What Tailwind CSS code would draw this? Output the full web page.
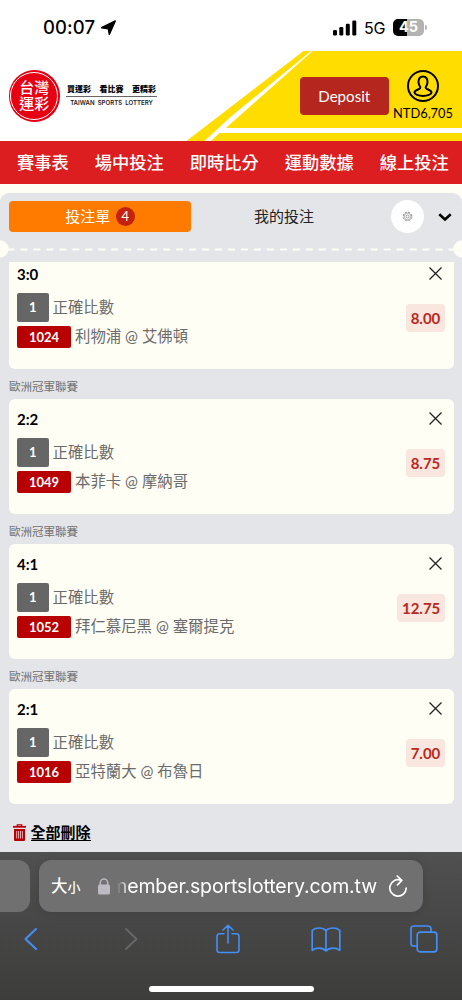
<!DOCTYPE html>
<html lang="zh-Hant">
<head>
<meta charset="utf-8">
<meta name="viewport" content="width=device-width, initial-scale=1">
<title>台灣運彩</title>
<script src="https://cdn.jsdelivr.net/npm/@tailwindcss/browser@4"></script>
</head>
<body class="w-[462px] h-[1000px] overflow-hidden bg-[#fffef5] font-[Lato,'Noto_Sans_CJK_TC',sans-serif] text-black">
<div class="flex h-[1000px] w-[462px] flex-col overflow-hidden">

  <!-- Status bar -->
  <div class="flex h-[51px] shrink-0 items-center bg-white pt-[4px] pl-[43px] font-[Inter,sans-serif]">
    <span class="w-[55px] text-[18.5px] leading-none font-medium tracking-[0.1px] whitespace-nowrap">00:07</span>
    <svg class="ml-[2px]" width="17" height="16" viewBox="0 0 17 16"><path d="M15.300 1 9.300 14.400 8.300 8.700 1.500 7.700z" stroke="#000" stroke-width="1.400" stroke-linejoin="round"/></svg>
    <svg class="ml-[216px]" width="24" height="16" viewBox="0 0 24 16"><rect x="0" y="10" width="4" height="5.500" rx="1.200"/><rect x="6.300" y="7" width="4" height="8.500" rx="1.200"/><rect x="12.800" y="3.800" width="4" height="11.700" rx="1.200"/><rect x="19.300" y=".5" width="4" height="15" rx="1.200"/></svg>
    <span class="ml-[7px] w-[22px] text-[16px] leading-none tracking-[-0.3px]">5G</span>
    <span class="ml-[7px] flex h-[16.500px] w-[31px] items-center justify-center rounded-[5px] bg-linear-to-r from-black from-45% to-[#b3b3b3] to-45% text-[14.500px] leading-none font-bold text-white">45</span>
    <span class="ml-px h-[5px] w-[2px] rounded-r-full bg-[#b3b3b3]"></span>
  </div>

  <!-- Brand header -->
  <header class="relative flex h-[90px] shrink-0 bg-white">
    <svg class="absolute inset-0" width="462" height="90" viewBox="0 0 462 90">
      <path d="M303.500 0H462V90H186.500z" fill="#ffdd00"/>
      <path d="M311 0h1.700L231 72.500 226 77H462v5H219.500l-8.500 8h-6.500L231 65.500z" fill="#fff"/>
    </svg>
    <div class="relative flex w-full items-start">
      <div class="mt-[19px] ml-[8.500px] flex size-[51.500px] items-center justify-center rounded-full bg-[#e60012] p-[1.500px]">
        <div class="flex size-[48px] flex-col items-center justify-center rounded-full border border-white text-[15px] leading-[15.500px] font-medium text-white"><span>台灣</span><span>運彩</span></div>
      </div>
      <div class="mt-[34px] ml-[6px] w-[91px]">
        <div class="flex justify-between border-b border-[#666] px-[1px] pb-[2px] text-[8px] leading-[9px] font-black whitespace-nowrap"><span>買運彩</span><span>看比賽</span><span>更精彩</span></div>
        <div class="mt-[2px] text-center font-[Inter,sans-serif] text-[6.100px] leading-[7px] font-semibold whitespace-nowrap text-[#222] [word-spacing:1.500px]">TAIWAN SPORTS LOTTERY</div>
      </div>
      <button class="mt-[26px] ml-[143px] h-[38px] w-[88.500px] shrink-0 rounded-[4px] bg-[#b5261e] text-[15.100px] text-white">Deposit</button>
      <div class="mt-[19px] ml-[4px] flex w-[61px] flex-col items-center">
        <svg width="32" height="32" viewBox="0 0 32 32" fill="none" stroke="#000" stroke-width="2"><circle cx="16" cy="16" r="15"/><path d="M11.500 12c0-3.500 1.800-5.500 4.500-5.500s4.500 2 4.500 5.500c0 2.500-1 3.500-1.600 4.700-.5 1.200.1 2 1.600 2.600 2.300.9 4 1.800 4 3.200 0 1.800-4 3.500-8.500 3.500s-8.500-1.700-8.500-3.500c0-1.400 1.700-2.300 4-3.200 1.500-.6 2.100-1.400 1.600-2.600-.6-1.200-1.600-2.200-1.600-4.700z"/></svg>
        <span class="mt-[3px] text-[12.900px] leading-[16px] whitespace-nowrap">NTD6,705</span>
      </div>
    </div>
  </header>

  <!-- Main navigation -->
  <nav class="flex h-[43px] shrink-0 items-center gap-[26px] bg-[#dc1e20] pl-[17px] text-[17.250px] leading-none font-medium whitespace-nowrap text-white">
    <span>賽事表</span><span>場中投注</span><span>即時比分</span><span>運動數據</span><span>線上投注</span>
  </nav>

  <!-- Betting slip -->
  <main class="mt-[9px] flex h-[659px] shrink-0 flex-col overflow-hidden rounded-t-[9px] bg-[#e4e5e8]">
    <div class="flex h-[46px] shrink-0 items-center pl-[8.500px]">
      <div class="flex h-[31px] w-[182px] items-center justify-center gap-[5.500px] rounded-[4px] bg-[#ff7b00] pl-[1px] text-[15px] leading-none text-white"><span>投注單</span><span class="flex size-[19px] items-center justify-center rounded-full bg-[#c4210f] text-[13px]">4</span></div>
      <span class="ml-[63.500px] w-[60px] text-[15px] leading-none whitespace-nowrap text-[#222]">我的投注</span>
      <div class="ml-[77px] flex size-[33px] items-center justify-center rounded-full bg-white">
        <svg width="11" height="11" viewBox="0 0 11 11" fill="none" stroke="#888"><circle cx="5.500" cy="5.500" r="4.300" stroke-width="1" stroke-dasharray="2.200 1.177"/><circle cx="5.500" cy="5.500" r="3.300" stroke-width=".6"/><circle cx="5.500" cy="5.500" r="1.500" stroke-width=".8"/></svg>
      </div>
      <svg class="mt-[2px] ml-[14px]" width="14" height="9" viewBox="0 0 14 9" fill="none" stroke="#000" stroke-width="2.600"><path d="M1.300 1.300 7 6.500l5.700-5.200"/></svg>
    </div>
    <svg class="mt-[1px] shrink-0" width="462" height="18" viewBox="0 0 462 18"><path d="M7.500 9.500H455" stroke="#fffef5" stroke-width="2.200" stroke-dasharray="7 5.970"/><circle cx="0" cy="8.800" r="8.600" fill="#fffef5"/><circle cx="462" cy="8.800" r="8.600" fill="#fffef5"/></svg>

    <div class="mt-[-3px] flex h-[597px] flex-col px-[9px] pt-[7px]">
      <section class="flex h-[106.500px] w-[444.500px] shrink-0 rounded-b-[6px] bg-[#fffef5]">
        <div class="flex-1 pl-[8px]">
          <div class="mt-[4px] text-[15px] leading-[16px] font-bold">3:0</div>
          <div class="mt-[10.500px] flex items-center text-[15.400px] leading-none text-[#6b6b6b]"><span class="mr-[4px] flex h-[29.500px] w-[31.500px] items-center justify-center rounded-[2px] bg-[#666] text-[13px] font-bold text-white">1</span>正確比數</div>
          <div class="mt-[4px] flex items-center text-[15.400px] leading-none text-[#6b6b6b]"><span class="mr-[4px] flex h-[21.500px] w-[54px] items-center justify-center rounded-[2px] bg-[#b80000] pt-px text-[13px] font-bold text-white">1024</span>利物浦 @ 艾佛頓</div>
        </div>
        <div class="flex flex-col items-end pr-[8.500px]">
          <svg class="mt-[5px] mr-[3px]" width="13" height="13" viewBox="0 0 13 13" stroke="#222" stroke-width="1.300"><path d="M.5.5l12 12M12.500.5l-12 12"/></svg>
          <span class="mt-[24px] flex h-[28px] items-center rounded-[4px] bg-[#f8e6df] px-[4.700px] text-[15px] leading-none font-bold text-[#b9281e]">8.00</span>
        </div>
      </section>
      <div class="flex h-[30.500px] shrink-0 items-center pt-[5px] text-[11.500px] leading-none text-[#707070]">歐洲冠軍聯賽</div>

      <section class="flex h-[115px] w-[444.500px] shrink-0 rounded-[6px] bg-[#fffef5]">
        <div class="flex-1 pl-[8px]">
          <div class="mt-[12px] text-[15px] leading-[16px] font-bold">2:2</div>
          <div class="mt-[10.500px] flex items-center text-[15.400px] leading-none text-[#6b6b6b]"><span class="mr-[4px] flex h-[29.500px] w-[31.500px] items-center justify-center rounded-[2px] bg-[#666] text-[13px] font-bold text-white">1</span>正確比數</div>
          <div class="mt-[4px] flex items-center text-[15.400px] leading-none text-[#6b6b6b]"><span class="mr-[4px] flex h-[21.500px] w-[54px] items-center justify-center rounded-[2px] bg-[#b80000] pt-px text-[13px] font-bold text-white">1049</span>本菲卡 @ 摩納哥</div>
        </div>
        <div class="flex flex-col items-end pr-[8.500px]">
          <svg class="mt-[13px] mr-[3px]" width="13" height="13" viewBox="0 0 13 13" stroke="#222" stroke-width="1.300"><path d="M.5.5l12 12M12.500.5l-12 12"/></svg>
          <span class="mt-[24px] flex h-[28px] items-center rounded-[4px] bg-[#f8e6df] px-[4.700px] text-[15px] leading-none font-bold text-[#b9281e]">8.75</span>
        </div>
      </section>
      <div class="flex h-[30px] shrink-0 items-center pt-[5px] text-[11.500px] leading-none text-[#707070]">歐洲冠軍聯賽</div>

      <section class="flex h-[115px] w-[444.500px] shrink-0 rounded-[6px] bg-[#fffef5]">
        <div class="flex-1 pl-[8px]">
          <div class="mt-[12px] text-[15px] leading-[16px] font-bold">4:1</div>
          <div class="mt-[10.500px] flex items-center text-[15.400px] leading-none text-[#6b6b6b]"><span class="mr-[4px] flex h-[29.500px] w-[31.500px] items-center justify-center rounded-[2px] bg-[#666] text-[13px] font-bold text-white">1</span>正確比數</div>
          <div class="mt-[4px] flex items-center text-[15.400px] leading-none text-[#6b6b6b]"><span class="mr-[4px] flex h-[21.500px] w-[54px] items-center justify-center rounded-[2px] bg-[#b80000] pt-px text-[13px] font-bold text-white">1052</span>拜仁慕尼黑 @ 塞爾提克</div>
        </div>
        <div class="flex flex-col items-end pr-[8.500px]">
          <svg class="mt-[13px] mr-[3px]" width="13" height="13" viewBox="0 0 13 13" stroke="#222" stroke-width="1.300"><path d="M.5.5l12 12M12.500.5l-12 12"/></svg>
          <span class="mt-[24px] flex h-[28px] items-center rounded-[4px] bg-[#f8e6df] px-[4.700px] text-[15px] leading-none font-bold text-[#b9281e]">12.75</span>
        </div>
      </section>
      <div class="flex h-[30px] shrink-0 items-center pt-[5px] text-[11.500px] leading-none text-[#707070]">歐洲冠軍聯賽</div>

      <section class="flex h-[115px] w-[444.500px] shrink-0 rounded-[6px] bg-[#fffef5]">
        <div class="flex-1 pl-[8px]">
          <div class="mt-[12px] text-[15px] leading-[16px] font-bold">2:1</div>
          <div class="mt-[10.500px] flex items-center text-[15.400px] leading-none text-[#6b6b6b]"><span class="mr-[4px] flex h-[29.500px] w-[31.500px] items-center justify-center rounded-[2px] bg-[#666] text-[13px] font-bold text-white">1</span>正確比數</div>
          <div class="mt-[4px] flex items-center text-[15.400px] leading-none text-[#6b6b6b]"><span class="mr-[4px] flex h-[21.500px] w-[54px] items-center justify-center rounded-[2px] bg-[#b80000] pt-px text-[13px] font-bold text-white">1016</span>亞特蘭大 @ 布魯日</div>
        </div>
        <div class="flex flex-col items-end pr-[8.500px]">
          <svg class="mt-[13px] mr-[3px]" width="13" height="13" viewBox="0 0 13 13" stroke="#222" stroke-width="1.300"><path d="M.5.5l12 12M12.500.5l-12 12"/></svg>
          <span class="mt-[24px] flex h-[28px] items-center rounded-[4px] bg-[#f8e6df] px-[4.700px] text-[15px] leading-none font-bold text-[#b9281e]">7.00</span>
        </div>
      </section>

      <div class="mt-[20px] flex items-center pl-[4px]">
        <svg width="13" height="17" viewBox="0 0 13 17" fill="none" stroke="#b80000"><path d="M0 2.800h13" stroke-width="1.800"/><path d="M4.300 2.500V.8h4.400v1.700" stroke-width="1.200"/><path d="M1 5h11v11a1 1 0 0 1-1 1H2a1 1 0 0 1-1-1z" fill="#b80000" stroke="none"/><path d="M3.700 7v7.500M5.600 7v7.500M7.500 7v7.500M9.400 7v7.500" stroke="#f3d9da" stroke-width=".8"/></svg>
        <span class="ml-[4.500px] border-b border-black text-[15px] leading-[15px] font-bold">全部刪除</span>
      </div>
    </div>
  </main>

  <!-- Browser toolbar -->
  <footer class="flex h-[148px] shrink-0 flex-col bg-linear-to-b from-[#505050] to-[#3d3d3c]">
    <div class="mt-[8px] flex h-[52px] gap-[9px]">
      <div class="w-[30px] rounded-r-[12px] bg-[#707070]"></div>
      <div class="flex w-[384px] items-center rounded-[12px] bg-[#707070] pl-[12px] text-white shadow-[0_1px_8px_rgba(0,0,0,0.12)]">
        <span class="flex w-[30px] items-baseline text-[16.500px] leading-none font-medium whitespace-nowrap">大<span class="text-[13px]">小</span></span>
        <svg class="ml-[17px]" width="12" height="17" viewBox="0 0 12 17"><rect y="6.500" width="12" height="10" rx="1.600" fill="#bdbac3"/><path d="M2.300 7V4.800a3.700 3.700 0 0 1 7.400 0V7" fill="none" stroke="#bdbac3" stroke-width="1.500"/></svg>
        <div class="ml-[7px] flex w-[260px] justify-end overflow-hidden font-[Inter,sans-serif] text-[19.500px] leading-[26px] tracking-[-0.120px] whitespace-nowrap [mask-image:linear-gradient(to_right,transparent,black_12px)]">member.sportslottery.com.tw</div>
        <svg class="ml-[11px]" width="20" height="23" viewBox="0 0 20 23" fill="none" stroke="#fff" stroke-width="1.700" stroke-linecap="round" stroke-linejoin="round"><path d="M12.800 5.200A8.200 8.200 0 1 0 18.200 13M9.300 1.200l4.500 4.200-4.300 4.400"/></svg>
      </div>
    </div>
    <div class="mt-[10px] flex h-[34px] items-center pl-[24px] text-[#438ef7]">
      <svg width="13" height="22" viewBox="0 0 13 22" fill="none" stroke="currentColor" stroke-width="2" stroke-linecap="round" stroke-linejoin="round"><path d="M12 1 1.500 11 12 21"/></svg>
      <svg class="ml-[88px]" width="13" height="22" viewBox="0 0 13 22" fill="none" stroke="#686868" stroke-width="1.800" stroke-linecap="round" stroke-linejoin="round"><path d="m1 1 10.500 10L1 21"/></svg>
      <svg class="mt-[-1px] ml-[78px]" width="24" height="30" viewBox="0 0 24 30" fill="none" stroke="currentColor" stroke-width="1.600" stroke-linecap="round" stroke-linejoin="round"><path d="M8 9.700H3.800a2.800 2.800 0 0 0-2.800 2.800v13.200a2.800 2.800 0 0 0 2.800 2.800h16.400a2.800 2.800 0 0 0 2.800-2.800V12.500a2.800 2.800 0 0 0-2.800-2.800H16M12 19V1.300M7 6l5-4.700L17 6"/></svg>
      <svg class="ml-[71px]" width="30" height="25" viewBox="0 0 30 25" fill="none" stroke="currentColor" stroke-width="1.700" stroke-linejoin="round"><path d="M15 3.600C13.400 1.900 11 1 8.200 1S3 1.800 1.200 3.300v20C3 21.800 5.300 21.200 8 21.200s5.400 1 7 2.800c1.600-1.800 4.300-2.800 7-2.800s5 .6 6.800 2.100v-20C27 1.800 24.600 1 21.800 1S16.600 1.900 15 3.600zV24"/></svg>
      <svg class="ml-[68.500px]" width="28" height="28" viewBox="0 0 28 28" fill="none" stroke="currentColor" stroke-width="1.700"><rect x="7.200" y="7.200" width="19.600" height="19.600" rx="2.800"/><path d="M7 21H3.800A2.800 2.800 0 0 1 1 18.200V3.800A2.800 2.800 0 0 1 3.800 1h14.400A2.800 2.800 0 0 1 21 3.800V7"/></svg>
    </div>
    <div class="mt-[30px] ml-[148.500px] h-[5.500px] w-[165px] rounded-full bg-white"></div>
  </footer>
</div>
</body>
</html>
